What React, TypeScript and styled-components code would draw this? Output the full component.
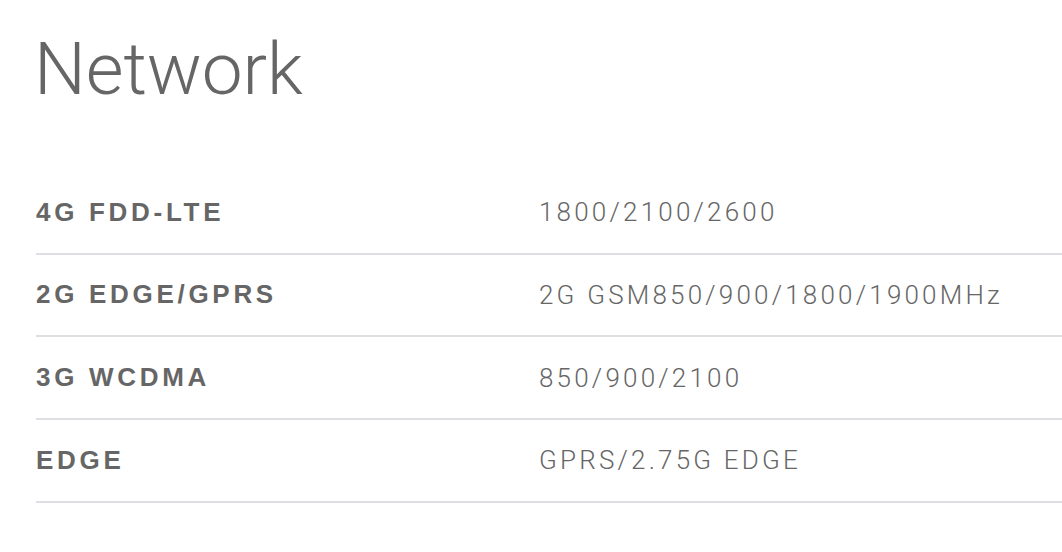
import styled, { createGlobalStyle } from "styled-components";

const GlobalStyle = createGlobalStyle`
  html, body {
    margin: 0;
    padding: 0;
    background: #fff;
  }
`;

const Page = styled.div`
  padding: 24px 0 0 36px;
  font-family: Roboto, "Liberation Sans", Arial, sans-serif;
  color: #666;
`;

const Title = styled.h1`
  margin: 0 0 58px -2px;
  font-size: 73px;
  font-weight: 300;
  line-height: 90px;
  letter-spacing: -0.1px;
`;

const Table = styled.div`
  display: flex;
  flex-direction: column;
`;

const Row = styled.div`
  display: grid;
  grid-template-columns: 503px 1fr;
  align-items: center;
  height: 80.67px;
  border-bottom: 2px solid #dfdfe3;
`;

const Label = styled.div`
  font-family: "Liberation Sans", Arial, sans-serif;
  font-size: 26px;
  font-weight: 700;
  letter-spacing: 3.7px;
`;

const Value = styled.div`
  font-size: 26px;
  font-weight: 300;
  letter-spacing: 3.2px;
`;

const specs = [
  { label: "4G FDD-LTE", value: "1800/2100/2600" },
  { label: "2G EDGE/GPRS", value: "2G GSM850/900/1800/1900MHz" },
  { label: "3G WCDMA", value: "850/900/2100" },
  { label: "EDGE", value: "GPRS/2.75G EDGE" },
];

function App() {
  return (
    <>
      <GlobalStyle />
      <Page>
        <Title>Network</Title>
        <Table>
          {specs.map((s) => (
            <Row key={s.label}>
              <Label>{s.label}</Label>
              <Value>{s.value}</Value>
            </Row>
          ))}
        </Table>
      </Page>
    </>
  );
}

export default App;
